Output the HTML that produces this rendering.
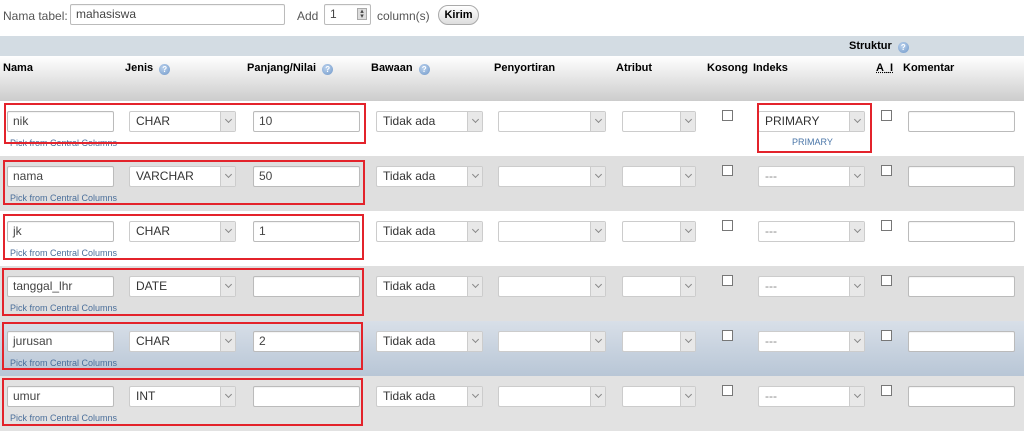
<!DOCTYPE html>
<html><head><meta charset="utf-8"><style>
*{box-sizing:border-box;margin:0;padding:0}
body{width:1024px;height:437px;background:#fff;font-family:"Liberation Sans",Arial,sans-serif;font-size:12px;color:#333;position:relative;overflow:hidden}
.a{position:absolute}
.inp{position:absolute;height:21px;background:#fff;border:1px solid #bbb;border-radius:2px;padding:2px 5px;font-size:12px;color:#444;line-height:15px;white-space:nowrap;box-shadow:inset 0 1px 1px rgba(0,0,0,.05)}
.sel{position:absolute;height:21px;background:#fff;border:1px solid #ccc;border-radius:2px;padding:2px 6px;font-size:12px;color:#333;line-height:15px}
.sel::after{content:"";position:absolute;right:0;top:0;width:14px;height:19px;background:#e8e8e8;border-left:1px solid #ccc}
.sel i{position:absolute;right:4px;top:5px;width:5px;height:5px;border-right:1px solid #888;border-bottom:1px solid #888;transform:rotate(45deg);z-index:2}
.cb{position:absolute;width:11px;height:11px;border:1px solid #777;background:#fff}
.pick{position:absolute;font-size:9px;color:#4a6e9a}
.red{position:absolute;border:2px solid #e3232b}
.th{position:absolute;top:62px;font-weight:bold;font-size:11px;color:#000}
.q{display:inline-block;width:11px;height:11px;border-radius:50%;background:radial-gradient(circle at 40% 35%,#bcd3ee,#6f97c8);vertical-align:-1px;margin-left:3px;color:#fff;font-size:8px;text-align:center;line-height:11px}
</style></head><body>
<div class="a" style="left:3px;top:9px;color:#555">Nama tabel:</div>
<div class="inp" style="left:70px;top:4px;width:215px;color:#444">mahasiswa</div>
<div class="a" style="left:297px;top:9px;color:#555">Add</div>
<div class="inp" style="left:324px;top:4px;width:47px">1<span style="position:absolute;right:3px;top:3px;width:10px;height:12px;background:#ddd;border:1px solid #aaa;font-size:7px;line-height:5px;text-align:center">▴<br>▾</span></div>
<div class="a" style="left:377px;top:9px;color:#555">column(s)</div>
<div class="a" style="left:438px;top:5px;width:41px;height:20px;border:1px solid #aaa;border-radius:10px;background:linear-gradient(#fff,#ddd);font-weight:bold;font-size:11px;text-align:center;line-height:18px;color:#000">Kirim</div>

<div class="a" style="left:0;top:36px;width:1024px;height:20px;background:#d3dce3"></div>
<div class="a" style="left:849px;top:40px;font-weight:bold;font-size:11px;color:#000">Struktur <span class="q">?</span></div>
<div class="a" style="left:0;top:56px;width:1024px;height:45px;background:linear-gradient(#fff,#ccc)"></div>
<div class="th" style="left:3px">Nama</div>
<div class="th" style="left:125px">Jenis <span class="q">?</span></div>
<div class="th" style="left:247px">Panjang/Nilai <span class="q">?</span></div>
<div class="th" style="left:371px">Bawaan <span class="q">?</span></div>
<div class="th" style="left:494px">Penyortiran</div>
<div class="th" style="left:616px">Atribut</div>
<div class="th" style="left:707px">Kosong</div>
<div class="th" style="left:753px">Indeks</div>
<div class="th" style="left:876px;text-decoration:underline dotted">A_I</div>
<div class="th" style="left:903px">Komentar</div>

<div class="a" style="left:0;top:101px;width:1024px;height:55px;background:#fff"></div>
<div class="a" style="left:0;top:156px;width:1024px;height:55px;background:#dfdfdf"></div>
<div class="a" style="left:0;top:211px;width:1024px;height:55px;background:#fff"></div>
<div class="a" style="left:0;top:266px;width:1024px;height:55px;background:#dfdfdf"></div>
<div class="a" style="left:0;top:321px;width:1024px;height:55px;background:linear-gradient(#d8dfe8,#b8c6d6)"></div>
<div class="a" style="left:0;top:376px;width:1024px;height:55px;background:#e2e2e2"></div>

<div id="rows"></div>
<script>
var d=[["nik","CHAR","10","PRIMARY"],["nama","VARCHAR","50","---"],["jk","CHAR","1","---"],["tanggal_lhr","DATE","","---"],["jurusan","CHAR","2","---"],["umur","INT","","---"]];
var h="";
d.forEach(function(r,i){var y=111+i*55;
h+='<div class="inp" style="left:7px;top:'+y+'px;width:107px">'+r[0]+'</div>';
h+='<div class="pick" style="left:10px;top:'+(y+27)+'px">Pick from Central Columns</div>';
h+='<div class="sel" style="left:129px;top:'+y+'px;width:107px">'+r[1]+'<i></i></div>';
h+='<div class="inp" style="left:253px;top:'+y+'px;width:107px">'+r[2]+'</div>';
h+='<div class="sel" style="left:376px;top:'+y+'px;width:107px">Tidak ada<i></i></div>';
h+='<div class="sel" style="left:498px;top:'+y+'px;width:108px"><i></i></div>';
h+='<div class="sel" style="left:622px;top:'+y+'px;width:74px"><i></i></div>';
h+='<div class="cb" style="left:722px;top:'+(y-1)+'px"></div>';
h+='<div class="sel" style="left:758px;top:'+y+'px;width:107px;'+(i?'color:#888':'')+'">'+r[3]+'<i></i></div>';
h+='<div class="cb" style="left:881px;top:'+(y-1)+'px"></div>';
h+='<div class="inp" style="left:908px;top:'+y+'px;width:107px"></div>';
});
h+='<div class="a" style="left:792px;top:137px;font-size:9px;color:#4a76a8">PRIMARY</div>';
var b=[[4,103,362,41],[3,160,362,45],[3,214,361,46],[2,268,362,48],[2,322,361,48],[2,378,361,48]];
b.forEach(function(x){h+='<div class="red" style="left:'+x[0]+'px;top:'+x[1]+'px;width:'+x[2]+'px;height:'+x[3]+'px"></div>'});
h+='<div class="red" style="left:757px;top:103px;width:115px;height:50px"></div>';
document.getElementById("rows").innerHTML=h;
</script>
</body></html>
